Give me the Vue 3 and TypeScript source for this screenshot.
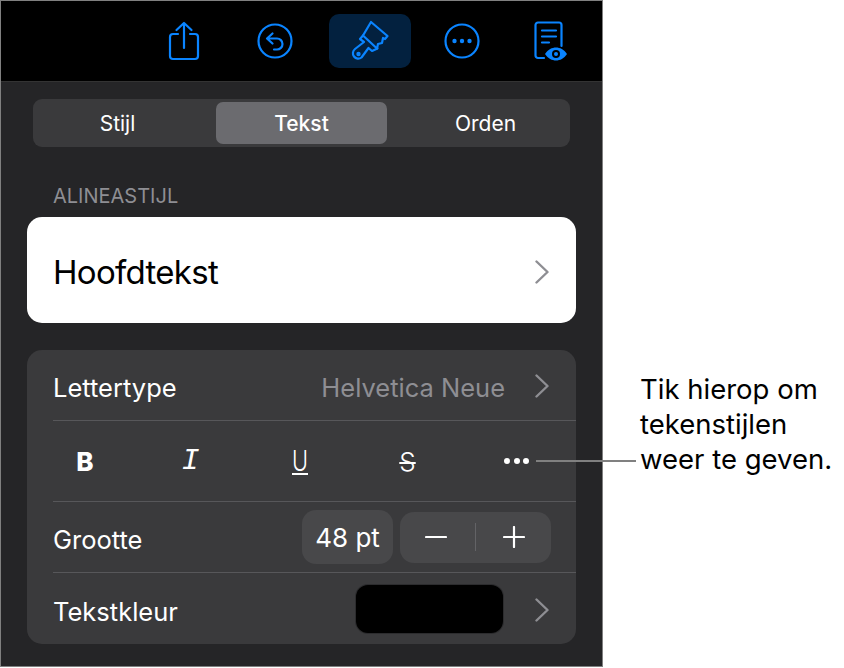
<template>
  <div class="page">
    <div class="panel">
      <div class="toolbar">
        <button class="tool">
          <svg width="36" height="40" viewBox="0 0 36 40" fill="none" stroke="#0a84ff" stroke-width="2.2" stroke-linecap="round" stroke-linejoin="round">
            <path d="M12 13H7a3 3 0 0 0-3 3v19a3 3 0 0 0 3 3h22a3 3 0 0 0 3-3V16a3 3 0 0 0-3-3h-5" />
            <path d="M18 27V2M10.500 9 18 2l7.500 7" />
          </svg>
        </button>
        <button class="tool">
          <svg width="36" height="36" viewBox="0 0 36 36" fill="none" stroke="#0a84ff" stroke-width="2.2" stroke-linecap="round" stroke-linejoin="round">
            <circle cx="18" cy="18" r="16.500" />
            <path d="M15.500 10.500 10 15.500l5.500 5M10.500 15.500H20a5.500 5.500 0 0 1 0 11h-3" />
          </svg>
        </button>
        <button class="tool active">
          <svg width="38" height="42" viewBox="0 0 38 42" fill="none" stroke="#0a84ff" stroke-width="2.2" stroke-linecap="round" stroke-linejoin="round">
            <path d="M20 2 36.500 16 34 19l-2-1-1 5-4 1-1 4.500-14-13Z" />
            <path d="m12 15.500-3 3.500 4 3-9 7a4.500 4.500 0 0 0 6.500 8.500l7-9.500 3.500 3 5.500-2.500" />
            <circle cx="7.500" cy="34" r="1.100" />
          </svg>
        </button>
        <button class="tool">
          <svg width="36" height="36" viewBox="0 0 36 36" fill="none" stroke="#0a84ff" stroke-width="2.2">
            <circle cx="18" cy="18" r="16.500" />
            <circle cx="10.500" cy="18" r="2.200" fill="#0a84ff" stroke="none" />
            <circle cx="18" cy="18" r="2.200" fill="#0a84ff" stroke="none" />
            <circle cx="25.500" cy="18" r="2.200" fill="#0a84ff" stroke="none" />
          </svg>
        </button>
        <button class="tool">
          <svg width="34" height="40" viewBox="0 0 34 40" fill="none" stroke="#0a84ff" stroke-width="2.2" stroke-linecap="round">
            <path d="M10 37H4a2.500 2.500 0 0 1-2.500-2.500V4A2.500 2.500 0 0 1 4 1.500h21A2.500 2.500 0 0 1 27.500 4v21" />
            <path d="M8 9.500h14M8 15.500h14M8 21.500h7" />
            <path d="M11 33c3-4.500 7-6.500 11-6.500s8 2 11 6.500c-3 4.500-7 6.500-11 6.500s-8-2-11-6.500Z" fill="#0a84ff" stroke="none" />
            <circle cx="22" cy="33" r="4" fill="#000" stroke="none" />
            <circle cx="22" cy="33" r="2" fill="#0a84ff" stroke="none" />
          </svg>
        </button>
      </div>

      <div class="content">
        <div class="segments">
          <span v-for="tab in tabs" :key="tab" class="segment" :class="{ selected: tab === 'Tekst' }">{{ tab }}</span>
        </div>

        <div class="section-label">ALINEASTIJL</div>
        <div class="style-card">
          <span>Hoofdtekst</span>
          <svg class="chevron" width="14" height="24" viewBox="0 0 14 24"><path d="M1.500 1.500 12.500 12 1.500 22.500" /></svg>
        </div>

        <div class="group">
          <div class="row">
            <span class="label">Lettertype</span>
            <div class="row-end">
              <span class="label muted">Helvetica Neue</span>
              <svg class="chevron" width="14" height="24" viewBox="0 0 14 24"><path d="M1.500 1.500 12.500 12 1.500 22.500" /></svg>
            </div>
          </div>
          <div class="row format">
            <span class="fmt bold">B</span>
            <span class="fmt italic">I</span>
            <span class="fmt under">U</span>
            <span class="fmt strike">S</span>
            <span class="dots"><i></i><i></i><i></i></span>
          </div>
          <div class="row">
            <span class="label">Grootte</span>
            <div class="size-controls">
              <span class="size-value">48 pt</span>
              <div class="stepper">
                <svg width="22" height="22" viewBox="0 0 22 22"><path d="M1 11h20" /></svg>
                <span class="step-sep"></span>
                <svg width="22" height="22" viewBox="0 0 22 22"><path d="M1 11h20M11 1v20" /></svg>
              </div>
            </div>
          </div>
          <div class="row">
            <span class="label">Tekstkleur</span>
            <div class="row-end">
              <span class="swatch"></span>
              <svg class="chevron" width="14" height="24" viewBox="0 0 14 24"><path d="M1.500 1.500 12.500 12 1.500 22.500" /></svg>
            </div>
          </div>
        </div>
      </div>
    </div>

    <div class="callout">
      <span class="callout-line"></span>
      <p>Tik hierop om<br />tekenstijlen<br />weer te geven.</p>
    </div>
  </div>
</template>

<script setup lang="ts">
const tabs: string[] = ['Stijl', 'Tekst', 'Orden']
</script>

<style scoped>
.page {
  position: relative;
  width: 844px;
  height: 668px;
  background: #fff;
  font-family: "Inter", "Liberation Sans", sans-serif;
  overflow: hidden;
}

.panel {
  width: 603px;
  height: 667px;
  box-sizing: border-box;
  background: #252527;
  border: 1px solid #808080;
  display: flex;
  flex-direction: column;
}

.toolbar {
  height: 81px;
  flex: none;
  background: #000;
  display: flex;
  align-items: center;
  justify-content: flex-end;
  padding-right: 10px;
  box-sizing: border-box;
  border-bottom: 1px solid #333;
}

.tool {
  width: 82px;
  height: 54px;
  border: 0;
  padding: 0;
  background: none;
  border-radius: 10px;
  display: flex;
  align-items: center;
  justify-content: center;
}

.tool:nth-child(1) {
  margin-right: 9px;
}

.tool:nth-child(2) {
  margin-right: 13px;
}

.tool:nth-child(3) {
  margin-right: 10px;
}

.tool:nth-child(4) {
  margin-right: 7px;
}

.tool.active {
  background: #03213f;
}

.content {
  padding: 17px 26px 0;
}

.segments {
  height: 48px;
  margin: 0 6px;
  border-radius: 9px;
  background: #3a3a3c;
  padding: 3px 0;
  box-sizing: border-box;
  display: grid;
  grid-template-columns: repeat(3, 171px);
  justify-content: center;
  gap: 13px;
}

.segment {
  display: flex;
  align-items: center;
  justify-content: center;
  border-radius: 7px;
  color: #fff;
  font-size: 21px;
}

.segment.selected {
  background: #6b6b6f;
  font-weight: 500;
}

.section-label {
  margin: 38px 0 10px 26px;
  color: #8e8e93;
  font-size: 20px;
  line-height: 22px;
}

.style-card {
  height: 106px;
  background: #fff;
  color: #000;
  border-radius: 15px;
  padding: 3px 27px 0 26px;
  box-sizing: border-box;
  display: flex;
  align-items: center;
  justify-content: space-between;
  font-size: 33px;
  letter-spacing: -0.7px;
}

.chevron {
  fill: none;
  stroke: #8e8e93;
  stroke-width: 2.4;
  stroke-linecap: round;
  stroke-linejoin: round;
}

.group {
  margin-top: 27px;
  background: #3a3a3c;
  border-radius: 15px;
  color: #fff;
  font-size: 25.5px;
  padding-left: 26px;
}

.row {
  height: 71px;
  box-sizing: border-box;
  display: flex;
  align-items: center;
  justify-content: space-between;
  padding-right: 26px;
  border-bottom: 1px solid #57575a;
}

.row:last-child {
  border-bottom: 0;
}

.label {
  margin-top: 5px;
}

.row-end {
  display: flex;
  align-items: center;
  gap: 30px;
  margin-right: 1px;
}

.row-end .chevron {
  margin-top: 2px;
}

.muted {
  color: #8e8e93;
}

.format {
  height: 81px;
  padding: 0 47px 0 17px;
}

.fmt {
  width: 30px;
  text-align: center;
  display: inline-block;
}

.bold {
  font-size: 26px;
  font-weight: 800;
}

.italic {
  font-size: 30px;
  font-style: italic;
  font-family: "Liberation Mono", monospace;
  transform: translateX(-2px);
}

.under {
  font-size: 29px;
  font-weight: 300;
  line-height: 34px;
  transform: scaleX(0.75);
  text-decoration: underline;
  text-decoration-thickness: 2px;
  text-underline-offset: 2px;
}

.strike {
  font-size: 26px;
  font-weight: 300;
  text-decoration: line-through;
  text-decoration-thickness: 1.5px;
}

.dots {
  display: flex;
  gap: 3.5px;
  margin-left: 4px;
}

.dots i {
  width: 6px;
  height: 6px;
  border-radius: 50%;
  background: #fff;
}

.size-controls {
  display: flex;
  align-items: center;
  gap: 7px;
  margin-right: -1px;
}

.size-value {
  height: 54px;
  width: 91px;
  border-radius: 14px;
  background: #48484a;
  display: flex;
  align-items: center;
  justify-content: center;
  font-size: 26px;
}

.stepper {
  width: 151px;
  height: 51px;
  padding: 0 26px 0 25px;
  box-sizing: border-box;
  border-radius: 14px;
  background: #48484a;
  display: flex;
  align-items: center;
  justify-content: space-between;
}

.stepper svg {
  fill: none;
  stroke: #fff;
  stroke-width: 2.2;
  stroke-linecap: round;
}

.step-sep {
  width: 1px;
  height: 28px;
  background: #636366;
}

.swatch {
  width: 147px;
  height: 48px;
  margin-right: 2px;
  border-radius: 12px;
  background: #000;
  box-shadow: 0 0 0 1px #2c2c2e;
}

.callout {
  position: absolute;
  left: 536px;
  top: 372px;
  display: flex;
  align-items: flex-end;
  gap: 4px;
}

.callout-line {
  width: 100px;
  height: 2px;
  margin-bottom: 15px;
  background: #808080;
}

.callout p {
  margin: 0;
  color: #000;
  font-size: 27.5px;
  line-height: 35px;
}
</style>
